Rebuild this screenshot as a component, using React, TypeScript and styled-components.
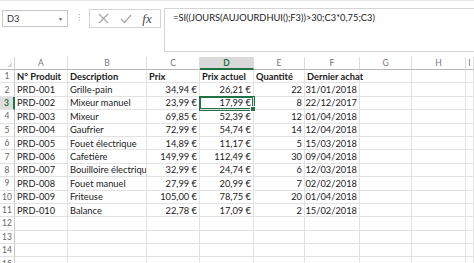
import React from "react";
import styled, { createGlobalStyle, css } from "styled-components";

const GlobalStyle = createGlobalStyle`
  body {
    margin: 0;
    background: #fff;
    font-family: "Lato", "Liberation Sans", sans-serif;
  }
`;

const Page = styled.div`
  width: 474px;
  height: 263px;
  overflow: hidden;
  background: #fff;
  border-top: 1px solid #e6e6e6;
  box-sizing: border-box;
`;

const TopBar = styled.div`
  display: flex;
  align-items: flex-start;
  height: 56px;
  padding-top: 7px;
  box-sizing: border-box;
`;

const NameBox = styled.div`
  display: flex;
  align-items: center;
  justify-content: space-between;
  margin: 2px 0 0 2px;
  width: 66px;
  height: 17px;
  box-sizing: border-box;
  border: 1px solid #c6c6c6;
  padding: 0 4px 0 4px;
  font-size: 9.3px;
  color: #333;
`;

const Arrow = styled.span`
  font-size: 5px;
  color: #555;
`;

const Dots = styled.div`
  display: flex;
  flex-direction: column;
  gap: 2px;
  margin: 6px 9px 0 11px;
  span {
    width: 1px;
    height: 1px;
    background: #b0b0b0;
  }
`;

const FxBox = styled.div`
  display: flex;
  align-items: center;
  justify-content: space-around;
  margin-top: 1px;
  width: 72px;
  height: 19px;
  box-sizing: border-box;
  border: 1px solid #d4d4d4;
  padding: 0 3px;
`;

const Fx = styled.span`
  font-family: "Liberation Serif", serif;
  font-style: italic;
  font-size: 13px;
  color: #444;
`;

const FormulaBar = styled.div`
  margin-left: 3px;
  flex: 1;
  height: 44px;
  box-sizing: border-box;
  border: 1px solid #d4d4d4;
  border-right: none;
  padding: 3px 0 0 8px;
  font-size: 9.3px;
  color: #222;
`;

const Sheet = styled.div`
  display: grid;
  grid-template-columns: 15px 53px 79px 53px 54px 51px 55px 52px 54px 1fr;
  grid-template-rows: 13px;
  grid-auto-rows: 13.4px;
  font-size: 9.3px;
  color: #1a1a1a;
`;

const Corner = styled.div`
  position: relative;
  border-right: 1px solid #d0d0d0;
  border-bottom: 1px solid #b8b8b8;
  &::after {
    content: "";
    position: absolute;
    right: 2px;
    bottom: 2px;
    border-left: 5px solid transparent;
    border-bottom: 5px solid #d8d8d8;
  }
`;

const ColHead = styled.div<{ $active?: boolean }>`
  display: flex;
  align-items: center;
  justify-content: center;
  border-right: 1px solid #dcdcdc;
  border-bottom: 1px solid #b8b8b8;
  color: #777;
  font-size: 8.5px;
  ${(p) =>
    p.$active &&
    css`
      background: #d9d9d9;
      color: #217346;
      font-weight: 700;
      border-bottom: 2px solid #217346;
    `}
`;

const RowHead = styled.div<{ $active?: boolean }>`
  display: flex;
  align-items: center;
  justify-content: center;
  border-right: 1px solid #c8c8c8;
  border-bottom: 1px solid #e2e2e2;
  color: #666;
  font-size: 8.5px;
  ${(p) =>
    p.$active &&
    css`
      background: #dedede;
      color: #217346;
      font-weight: 700;
      border-right: 2px solid #217346;
    `}
`;

const Cell = styled.div<{
  $right?: boolean;
  $bold?: boolean;
  $clip?: boolean;
  $selected?: boolean;
}>`
  position: relative;
  display: flex;
  align-items: center;
  justify-content: ${(p) => (p.$right ? "flex-end" : "flex-start")};
  padding: 0 2px;
  white-space: nowrap;
  overflow: ${(p) => (p.$clip ? "hidden" : "visible")};
  border-right: 1px solid #e2e2e2;
  border-bottom: 1px solid #e2e2e2;
  font-weight: ${(p) => (p.$bold ? 700 : 400)};
  z-index: ${(p) => (p.$selected ? 2 : 1)};
  ${(p) =>
    p.$selected &&
    css`
      box-shadow: 0 0 0 1px #217346, inset 0 0 0 1px #217346;
      &::after {
        content: "";
        position: absolute;
        right: -3px;
        bottom: -3px;
        width: 4px;
        height: 4px;
        background: #217346;
        border: 1px solid #fff;
      }
    `}
`;

const cols = ["A", "B", "C", "D", "E", "F", "G", "H", "I"];

const rows: string[][] = [
  ["N° Produit", "Description", "Prix", "Prix actuel", "Quantité", "Dernier achat"],
  ["PRD-001", "Grille-pain", "34,94 €", "26,21 €", "22", "31/01/2018"],
  ["PRD-002", "Mixeur manuel", "23,99 €", "17,99 €", "8", "22/12/2017"],
  ["PRD-003", "Mixeur", "69,85 €", "52,39 €", "12", "01/04/2018"],
  ["PRD-004", "Gaufrier", "72,99 €", "54,74 €", "14", "12/04/2018"],
  ["PRD-005", "Fouet électrique", "14,89 €", "11,17 €", "5", "15/03/2018"],
  ["PRD-006", "Cafetière", "149,99 €", "112,49 €", "30", "09/04/2018"],
  ["PRD-007", "Bouilloire électrique", "32,99 €", "24,74 €", "6", "12/03/2018"],
  ["PRD-008", "Fouet manuel", "27,99 €", "20,99 €", "7", "02/02/2018"],
  ["PRD-009", "Friteuse", "105,00 €", "78,75 €", "20", "01/04/2018"],
  ["PRD-010", "Balance", "22,78 €", "17,09 €", "2", "15/02/2018"],
];

const CrossIcon = () => (
  <svg width="11" height="11" viewBox="0 0 11 11">
    <path d="M1 1 L10 10 M10 1 L1 10" stroke="#a8a8a8" strokeWidth="1.2" fill="none" />
  </svg>
);

const CheckIcon = () => (
  <svg width="12" height="10" viewBox="0 0 12 10">
    <path d="M1 5 L4.5 8.5 L11 1" stroke="#a8a8a8" strokeWidth="1.2" fill="none" />
  </svg>
);

const App = () => {
  const total = 15;
  return (
    <Page>
      <GlobalStyle />
      <TopBar>
        <NameBox>
          <span>D3</span>
          <Arrow>▼</Arrow>
        </NameBox>
        <Dots>
          <span />
          <span />
          <span />
        </Dots>
        <FxBox>
          <CrossIcon />
          <CheckIcon />
          <Fx>fx</Fx>
        </FxBox>
        <FormulaBar>=SI((JOURS(AUJOURDHUI();F3))&gt;30;C3*0,75;C3)</FormulaBar>
      </TopBar>
      <Sheet>
        <Corner />
        {cols.map((c) => (
          <ColHead key={c} $active={c === "D"}>
            {c}
          </ColHead>
        ))}
        {Array.from({ length: total }, (_, i) => {
          const data = rows[i] || [];
          return (
            <React.Fragment key={i}>
              <RowHead $active={i === 2}>{i + 1}</RowHead>
              {cols.map((c, j) => {
                const v = data[j] || "";
                return (
                  <Cell
                    key={c}
                    $right={i > 0 && j >= 2}
                    $bold={i === 0}
                    $clip={j === 1}
                    $selected={i === 2 && j === 3}
                  >
                    {v}
                  </Cell>
                );
              })}
            </React.Fragment>
          );
        })}
      </Sheet>
    </Page>
  );
};

export default App;
